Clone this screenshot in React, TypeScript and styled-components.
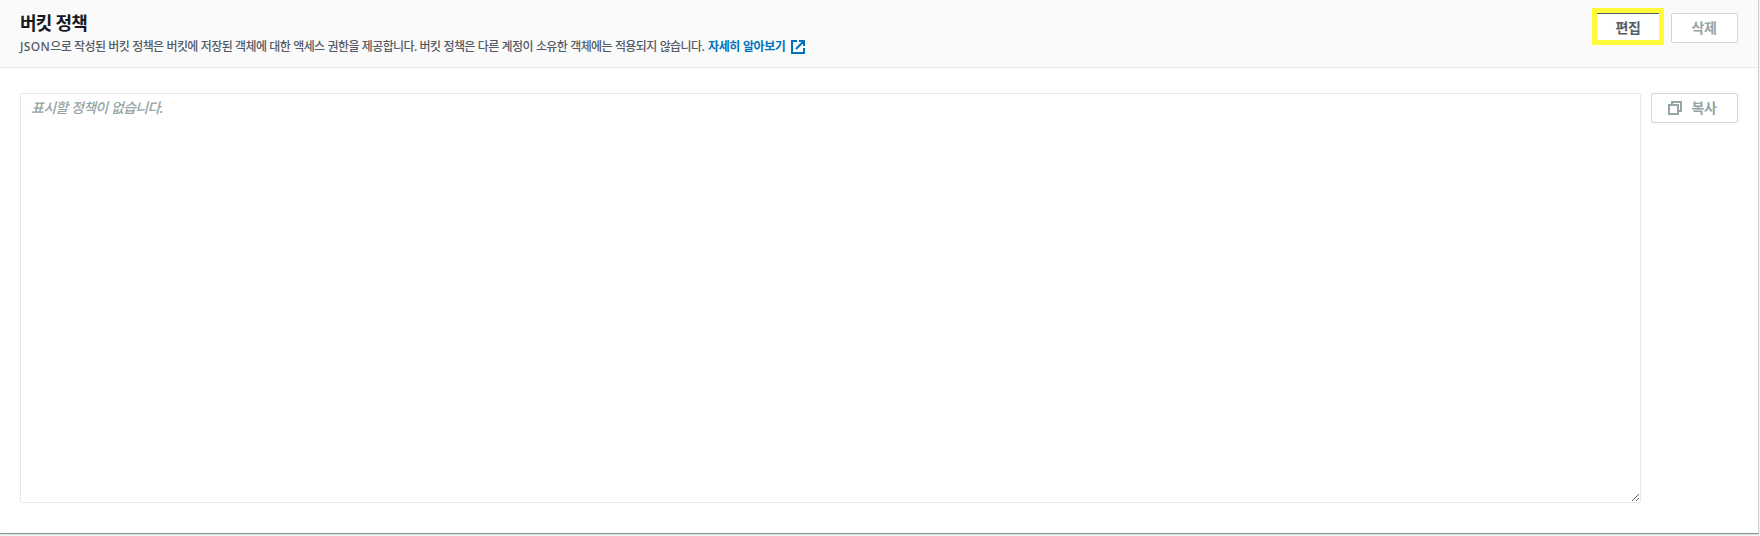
import React from "react";
import styled, { createGlobalStyle } from "styled-components";

const GlobalStyle = createGlobalStyle`
  * { box-sizing: border-box; }
  body {
    margin: 0;
    background: #f2f3f3;
    color: #16191f;
    font-family: "Noto Sans", "Noto Sans CJK KR", sans-serif;
  }
`;

const Page = styled.main`
  height: 536px;
  overflow: hidden;
`;

const Card = styled.section`
  display: flex;
  flex-direction: column;
  width: 1758px;
  height: 533px;
  background: #fff;
  box-shadow: 0 1px 0 #879596, 1px 0 0 #c6cecf, 1px 1px 0 #aab7b8, 1px 2px 0 #dce1e1;
`;

const Header = styled.header`
  display: flex;
  justify-content: space-between;
  height: 68px;
  padding: 13px 20px 0;
  background: #fafafa;
  border-bottom: 1px solid #e6e9e9;
`;

const Title = styled.h2`
  margin: -1px 0 0;
  font-size: 18px;
  line-height: 22px;
  font-weight: 700;
  letter-spacing: -0.9px;
  word-spacing: 0.5px;
`;

const Description = styled.p`
  display: flex;
  align-items: center;
  margin: 3px 0 0;
  font-size: 12px;
  line-height: 20px;
  font-weight: 500;
  letter-spacing: -0.6px;
  word-spacing: 0.45px;
  color: #545b64;
  white-space: nowrap;
`;

const Latin = styled.span`
  letter-spacing: 0.35px;
`;

const Link = styled.a`
  display: inline-flex;
  align-items: center;
  gap: 6px;
  margin-left: 4px;
  font-weight: 700;
  letter-spacing: -0.45px;
  color: #0073bb;
`;

const Actions = styled.div`
  display: flex;
  gap: 10px;
`;

const Button = styled.button<{ $width: number }>`
  display: flex;
  align-items: center;
  justify-content: center;
  gap: 10px;
  width: ${(p) => p.$width}px;
  height: 30px;
  padding: 0 1px 1px 0;
  border: 1px solid #d0d7d7;
  border-radius: 2px;
  background: #fff;
  color: #95a5a6;
  font-family: inherit;
  font-size: 14px;
  line-height: 20px;
  font-weight: 700;
  letter-spacing: -0.4px;
`;

const EditButton = styled(Button)`
  height: 27px;
  margin-right: 2px;
  padding: 1px 0 0;
  border-color: #545b64;
  border-radius: 0;
  border-width: 1px 0 0;
  color: #545b64;
  box-shadow: 0 0 0 5px #fffb38;
`;

const CopyButton = styled(Button)`
  padding-right: 5px;
`;

const Body = styled.div`
  display: flex;
  align-items: flex-start;
  gap: 10px;
  padding: 25px 20px 0;
`;

const PolicyText = styled.textarea`
  display: block;
  width: 1621px;
  height: 410px;
  padding: 4px 10px;
  border: 1px solid #e6e9e9;
  border-radius: 2px;
  outline: none;
  resize: both;
  background: #fff;
  font-family: inherit;
  font-size: 14px;
  line-height: 20px;
  font-weight: 500;
  letter-spacing: -0.7px;
  word-spacing: 0.5px;
  &::placeholder {
    color: #95a5a6;
    font-style: italic;
    opacity: 1;
  }
`;

const ExternalIcon = () => (
  <svg width="14" height="14" viewBox="0 0 14 14" fill="none" stroke="#0073bb" strokeWidth="2">
    <path d="M6 1H1v12h12V8M8 1h5v5M13 1L5 9" />
  </svg>
);

const CopyIcon = () => (
  <svg width="14" height="14" viewBox="0 0 14 14" fill="none" stroke="#95a5a6" strokeWidth="2">
    <path d="M1 4h9v9H1zM4 4V1h9v9h-3" />
  </svg>
);

export default function App() {
  return (
    <Page>
      <GlobalStyle />
      <Card>
        <Header>
          <div>
            <Title>버킷 정책</Title>
            <Description>
              <Latin>JSON</Latin>
              <span>
                으로 작성된 버킷 정책은 버킷에 저장된 객체에 대한 액세스 권한을 제공합니다. 버킷 정책은 다른 계정이 소유한 객체에는 적용되지 않습니다.
              </span>
              <Link>
                자세히 알아보기
                <ExternalIcon />
              </Link>
            </Description>
          </div>
          <Actions>
            <EditButton $width={62}>편집</EditButton>
            <Button $width={67}>삭제</Button>
          </Actions>
        </Header>
        <Body>
          <PolicyText readOnly placeholder="표시할 정책이 없습니다." />
          <CopyButton $width={87}>
            <CopyIcon />
            복사
          </CopyButton>
        </Body>
      </Card>
    </Page>
  );
}
